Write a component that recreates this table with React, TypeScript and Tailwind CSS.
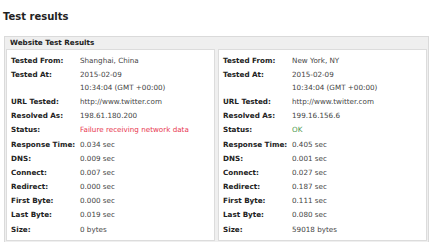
type Row = { label: string; value: string[]; tone?: "bad" | "ok" };

const left: Row[] = [
  { label: "Tested From:", value: ["Shanghai, China"] },
  { label: "Tested At:", value: ["2015-02-09", "10:34:04 (GMT +00:00)"] },
  { label: "URL Tested:", value: ["http://www.twitter.com"] },
  { label: "Resolved As:", value: ["198.61.180.200"] },
  { label: "Status:", value: ["Failure receiving network data"], tone: "bad" },
  { label: "Response Time:", value: ["0.034 sec"] },
  { label: "DNS:", value: ["0.009 sec"] },
  { label: "Connect:", value: ["0.007 sec"] },
  { label: "Redirect:", value: ["0.000 sec"] },
  { label: "First Byte:", value: ["0.000 sec"] },
  { label: "Last Byte:", value: ["0.019 sec"] },
  { label: "Size:", value: ["0 bytes"] },
];

const right: Row[] = [
  { label: "Tested From:", value: ["New York, NY"] },
  { label: "Tested At:", value: ["2015-02-09", "10:34:04 (GMT +00:00)"] },
  { label: "URL Tested:", value: ["http://www.twitter.com"] },
  { label: "Resolved As:", value: ["199.16.156.6"] },
  { label: "Status:", value: ["OK"], tone: "ok" },
  { label: "Response Time:", value: ["0.405 sec"] },
  { label: "DNS:", value: ["0.001 sec"] },
  { label: "Connect:", value: ["0.027 sec"] },
  { label: "Redirect:", value: ["0.187 sec"] },
  { label: "First Byte:", value: ["0.111 sec"] },
  { label: "Last Byte:", value: ["0.080 sec"] },
  { label: "Size:", value: ["59018 bytes"] },
];

function ResultPane({ rows }: { rows: Row[] }) {
  return (
    <div className="bg-white border border-[#dcdcdc] pl-[4px] pt-[3px] pb-[4px]">
      {rows.map((row, index) => (
        <div key={index} className="flex py-[0.6px] leading-[13px]">
          <div className="w-[69px] shrink-0 font-bold text-[#222]">{row.label}</div>
          <div
            className={
              row.tone === "bad"
                ? "text-[#e8374f]"
                : row.tone === "ok"
                ? "text-[#4f9a4f]"
                : "text-[#444]"
            }
          >
            {row.value.map((line, i) => (
              <div key={i}>{line}</div>
            ))}
          </div>
        </div>
      ))}
    </div>
  );
}

export default function App() {
  return (
    <div className="w-[438px] h-[242px] bg-white overflow-hidden font-['DejaVu_Sans',sans-serif] text-[7.2px]">
      <h1 className="pl-[3px] pt-[10px] text-[10px] leading-[14px] font-bold text-[#222]">
        Test results
      </h1>
      <div className="ml-[4px] mt-[12px] w-[425px] border border-[#dadada] bg-[#efefef] px-[1px] pb-[3px]">
        <div className="h-[12px] leading-[12px] pl-[4px] font-bold text-[#222]">
          Website Test Results
        </div>
        <div className="grid grid-cols-2 gap-[3px]">
          <ResultPane rows={left} />
          <ResultPane rows={right} />
        </div>
      </div>
    </div>
  );
}
